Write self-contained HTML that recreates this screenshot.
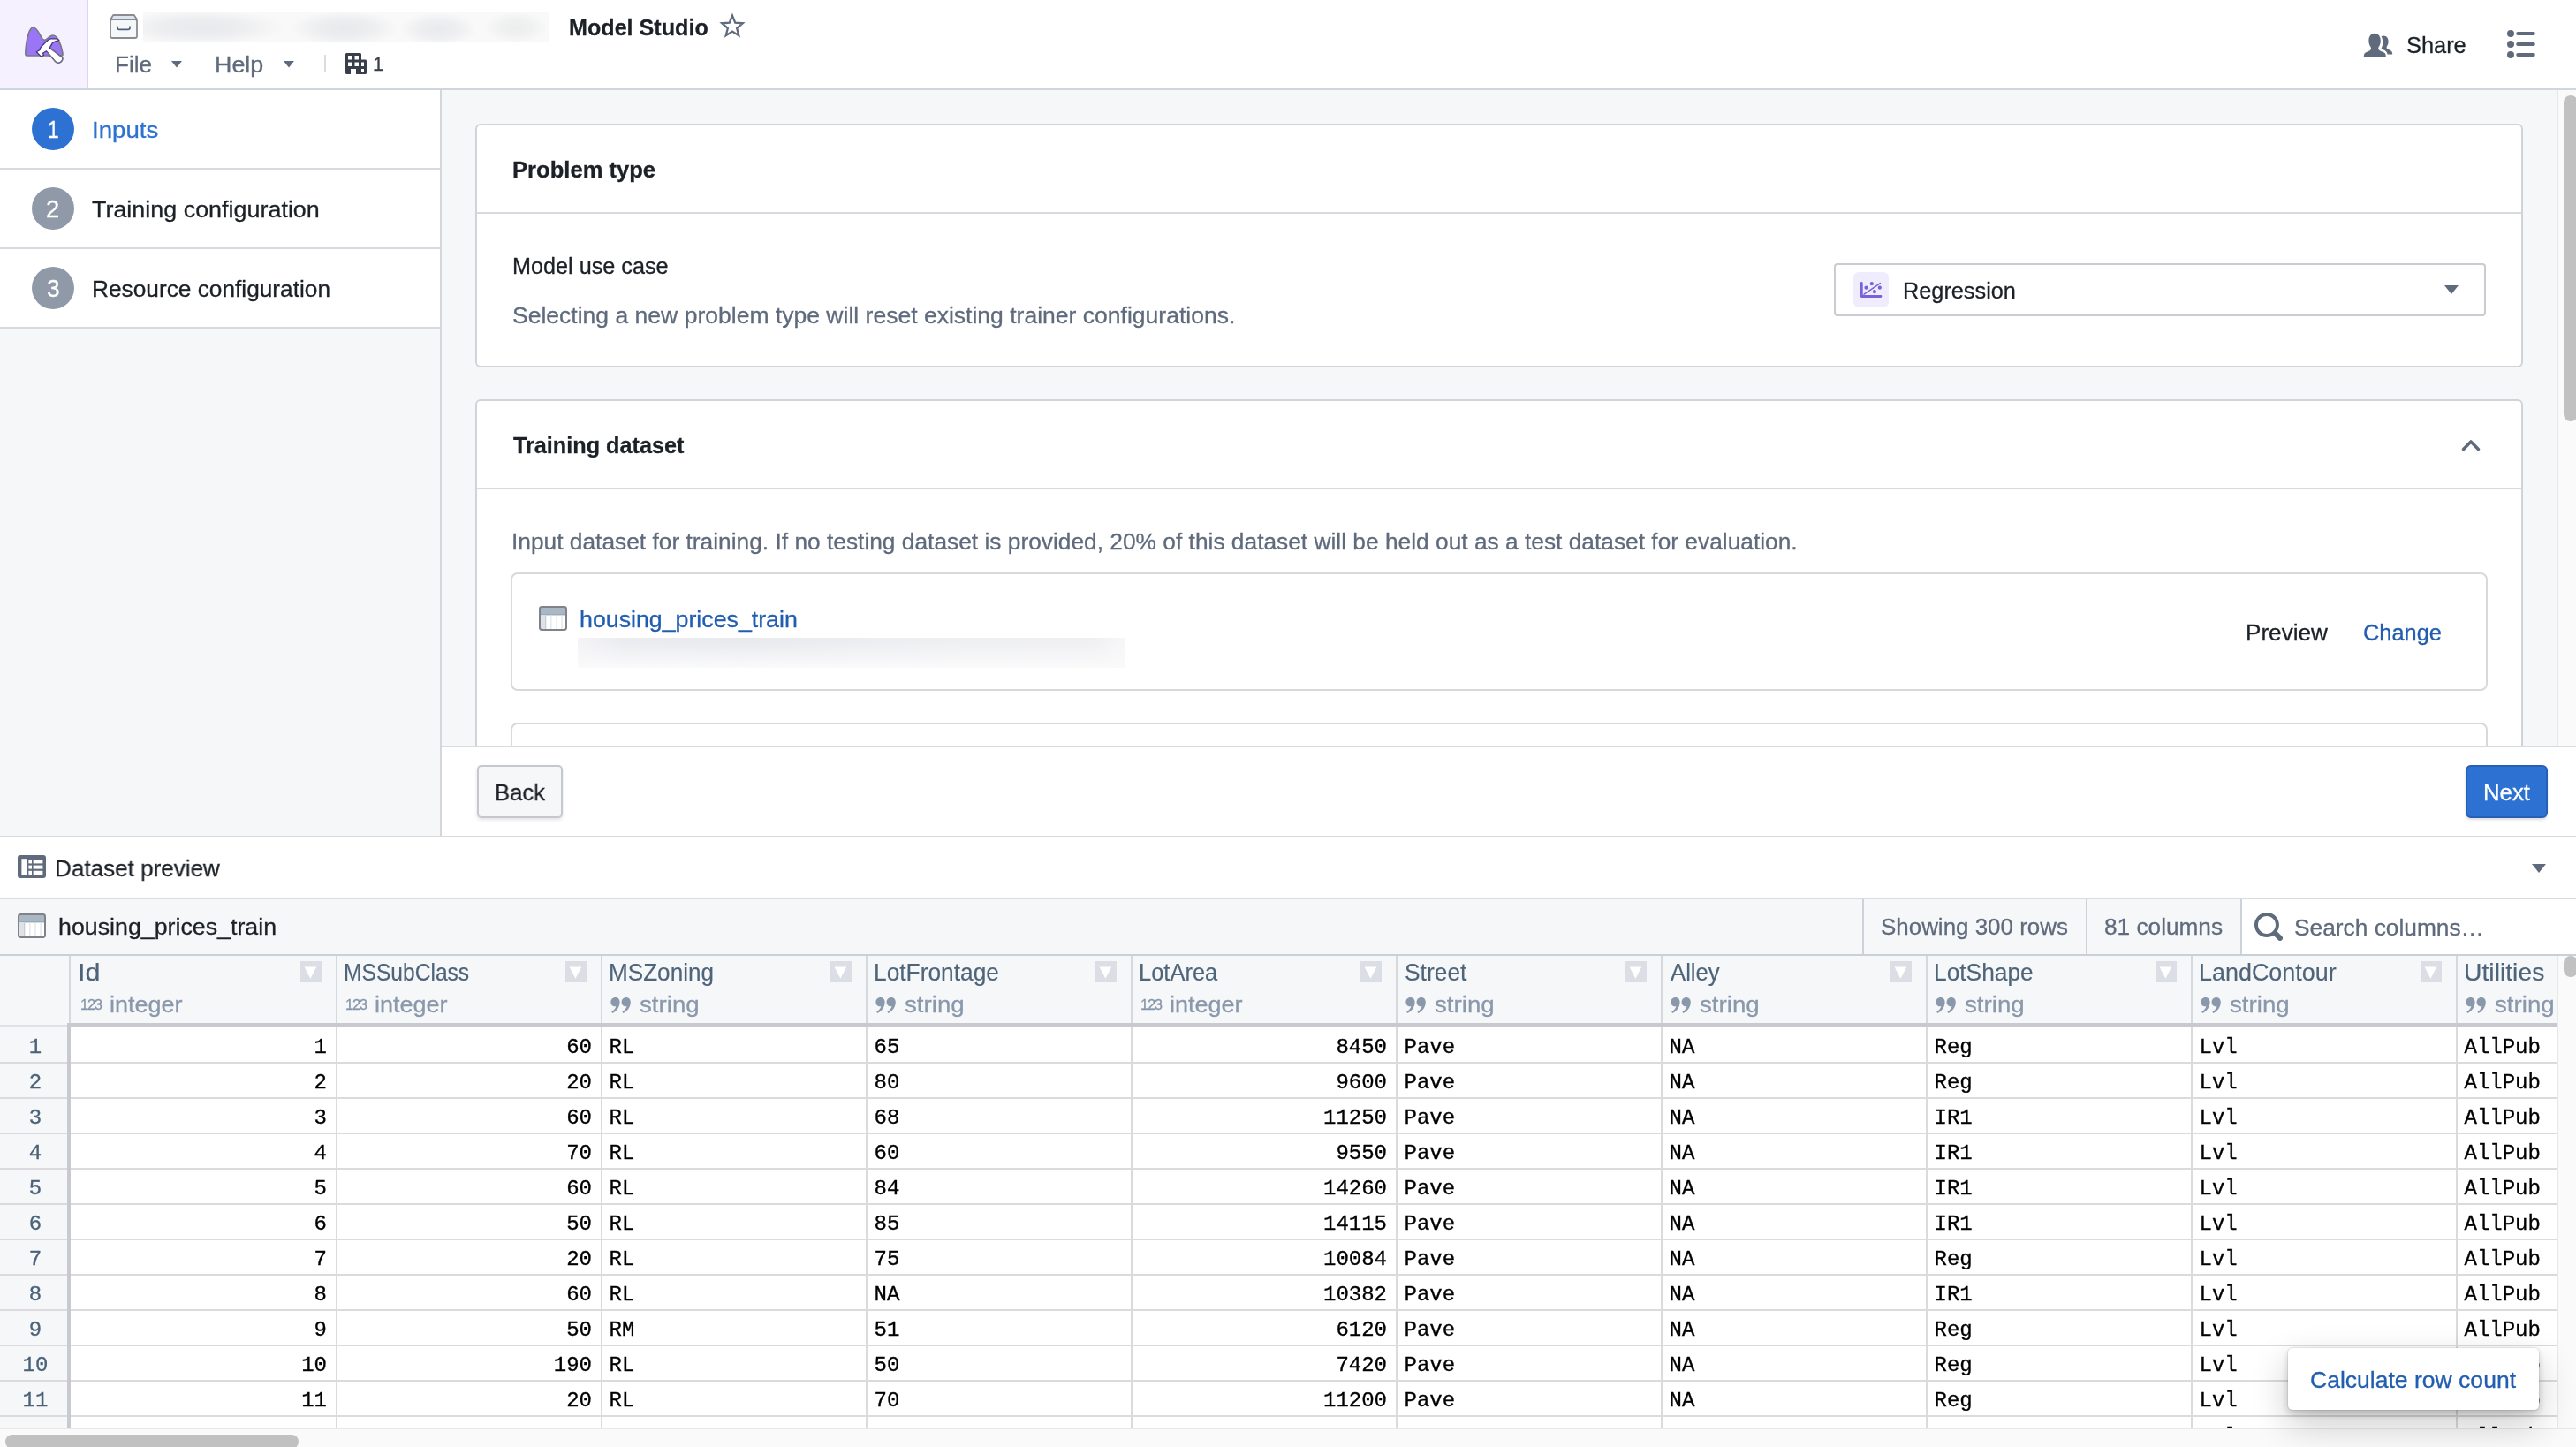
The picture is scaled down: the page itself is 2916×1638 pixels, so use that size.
<!DOCTYPE html>
<html lang="en"><head><meta charset="utf-8"><title>Model Studio</title>
<style>
html,body{margin:0;padding:0}
body{width:2916px;height:1638px;overflow:hidden;position:relative;background:#fff;
 font-family:"Liberation Sans",sans-serif;font-size:26px;color:#1c2127;-webkit-font-smoothing:antialiased}
div,svg{box-sizing:border-box}
.a{position:absolute}
.t{position:absolute;white-space:nowrap;line-height:1;-webkit-text-stroke:0.3px currentColor}
.m{position:absolute;white-space:pre;line-height:1;font-family:"Liberation Mono",monospace;-webkit-text-stroke:0.32px currentColor}
.card{position:absolute;background:#fff;border:2px solid #d0d4da;border-radius:6px}
.hl{position:absolute;height:2px;background:#d7dade}
.vl{position:absolute;width:2px;background:#d7dade}
</style></head><body>
<div id="root" style="position:absolute;left:0;top:0;width:2916px;height:1638px;overflow:hidden;will-change:transform">

<div class="a" style="left:0;top:0;width:2916px;height:102px;background:#fff;border-bottom:2px solid #cfd6de"></div>
<div class="a" style="left:0;top:0;width:100px;height:100px;background:#f5f1fe;border-right:2px solid #ddd3fb"></div>
<svg class="a" style="left:0;top:0" width="100" height="100" viewBox="0 0 100 100">
<path d="M30.2 63 C28.6 63 28.7 61 29 57 C30 44 33 31 37.5 31 C41.8 31 44 37.5 47 42.6 C49.2 46.2 51.3 46 54 43.4 C56 41.4 58 40 60 40 C65 40 69 50 70.8 59.6 C71.3 62.2 70.8 63 69.4 63 Z" fill="#9a76f6" stroke="#777a82" stroke-width="1.7" stroke-linejoin="round"/>
<path d="M41.2 58.8 L46.6 64.1 L49.5 62.2 L48.5 60.2 L52.5 57.8 L62.6 69.6 C64.2 71.4 67 71.6 69 70 C71 68.4 71.6 66 70 64.4 L56.2 54.2 L57.5 51.9 L59.2 48.9 C60.5 47.5 62.5 46.8 64.8 46.2 L66.8 45.6 C66 44.6 64.8 43.9 63.5 43.9 L57.2 43.9 C55.5 44.3 53.8 45.6 52.2 47.2 L47.2 52.2 L45.2 55.2 L45.2 56.5 Z" fill="#fff" stroke="#45357f" stroke-width="1.3" stroke-linejoin="round"/>
<path d="M53.4 58.8 L62.6 69.6 C64.2 71.4 67 71.6 69 70 C71 68.4 71.6 66 70 64.4 L58 55.6" fill="none" stroke="#74757d" stroke-width="1.3" stroke-linejoin="round"/>
</svg>
<svg class="a" style="left:122px;top:14px" width="36" height="32" viewBox="0 0 36 32">
<path d="M6.2 3 L29.8 3 L33 8 L3 8 Z" fill="#dbe6f0" stroke="#898c92" stroke-width="1.8" stroke-linejoin="round"/>
<rect x="3" y="8" width="30" height="21" rx="2" fill="#f6f7f9" stroke="#898c92" stroke-width="1.8"/>
<path d="M11 16.2 L11 17.5 Q11 19.4 13 19.4 L23 19.4 Q25 19.4 25 17.5 L25 16.2" fill="none" stroke="#4b6279" stroke-width="1.7" stroke-linecap="round"/>
</svg>
<div class="a" style="left:162px;top:14px;width:460px;height:34px;background:radial-gradient(ellipse 95px 20px at 66px 17px,#e8e9ec 0%,rgba(232,233,236,0.7) 50%,rgba(232,233,236,0) 100%),radial-gradient(ellipse 62px 20px at 228px 18px,#e8e9ec 0%,rgba(232,233,236,0.7) 50%,rgba(232,233,236,0) 100%),radial-gradient(ellipse 44px 19px at 334px 19px,#e9eaed 0%,rgba(233,234,237,0.7) 50%,rgba(233,234,237,0) 100%),radial-gradient(ellipse 36px 18px at 422px 17px,#eceded 0%,rgba(236,237,237,0.7) 50%,rgba(236,237,237,0) 100%),#f9f9f9"></div>
<div class="t " style="left:643.55px;top:19.00px;font-size:25.5px;color:#1c2127;font-weight:bold;transform-origin:0 0;transform:scaleX(0.9855);">Model Studio</div>
<svg class="a" style="left:813px;top:13px" width="32" height="32" viewBox="0 0 32 32">
<path transform="translate(16 16.6) scale(0.92) translate(-16 -16.6)" d="M16 3.6 L19.5 12.4 L28.8 13 L21.6 19 L23.9 28.1 L16 23.1 L8.1 28.1 L10.4 19 L3.2 13 L12.5 12.4 Z" fill="none" stroke="#5f6b7c" stroke-width="2.5" stroke-linejoin="miter"/>
</svg>
<div class="t " style="left:129.83px;top:60.00px;font-size:26.6px;color:#5f6b7c;transform-origin:0 0;transform:scaleX(0.9815);">File</div>
<svg class="a" style="left:194px;top:69px" width="12" height="8" viewBox="0 0 12 8"><path d="M0 0 L12 0 L6 7.6 Z" fill="#5f6b7c"/></svg>
<div class="t " style="left:243.27px;top:60.00px;font-size:26.6px;color:#5f6b7c;transform-origin:0 0;transform:scaleX(1.0096);">Help</div>
<svg class="a" style="left:321px;top:69px" width="12" height="8" viewBox="0 0 12 8"><path d="M0 0 L12 0 L6 7.6 Z" fill="#5f6b7c"/></svg>
<div class="a" style="left:367px;top:62px;width:2px;height:20px;background:#dcdcdc"></div>
<svg class="a" style="left:391px;top:60px" width="24" height="24" viewBox="0 0 16 16"><path fill="#383e4a" fill-rule="evenodd" d="M15 5h-3V1c0-.55-.45-1-1-1H1C.45 0 0 .45 0 1v14c0 .55.45 1 1 1h3v-4h4v4h7c.55 0 1-.45 1-1V6c0-.55-.45-1-1-1zM5 10H2V7h3v3zm0-5H2V2h3v3zm5 5H7V7h3v3zm0-5H7V2h3v3zm4 9h-2v-2h2v2zm0-4h-2V7h2v3z"/></svg>
<div class="t " style="left:422px;top:62.00px;font-size:22px;color:#383e4a;">1</div>
<svg class="a" style="left:2675px;top:36px" width="34" height="30" viewBox="0 0 34 30">
<g fill="#5f6b7c">
<path d="M23 4.6 C26.6 4.6 28.6 7.4 28.6 11 C28.6 13 28 15 26.9 16.4 C26.5 16.9 26.5 18.2 27 18.8 C27.8 19.8 30 20.4 31.6 21.4 C32.8 22.2 33.2 23.6 33.2 25.4 L27.6 25.4 C27.2 23 25.6 21.6 23.4 20.6 C22 20 21 19.4 20.6 18.6 C21.8 16.6 22.4 14 22.2 11 C22.1 8.8 21.6 6.8 20.6 5.2 C21.3 4.8 22.1 4.6 23 4.6 Z"/>
<path d="M13 1.8 C17.4 1.8 19.8 5.4 19.8 10.2 C19.8 12.8 19 15.4 17.6 17.2 C17.1 17.9 17.1 19.4 17.7 20.2 C18.7 21.5 21.8 22.2 23.8 23.4 C25.4 24.4 25.8 26 25.8 28 L0.8 28 C0.8 26 1.2 24.4 2.8 23.4 C4.8 22.2 7.6 21.5 8.6 20.2 C9.2 19.4 9.2 17.9 8.6 17.2 C7.2 15.4 6.4 12.8 6.4 10.2 C6.4 5.4 8.6 1.8 13 1.8 Z" stroke="#fff" stroke-width="1.6" paint-order="stroke"/>
</g></svg>
<div class="t " style="left:2724.14px;top:38.00px;font-size:26.5px;color:#1c2127;transform-origin:0 0;transform:scaleX(0.9576);">Share</div>
<svg class="a" style="left:2836px;top:32px" width="36" height="36" viewBox="0 0 36 36"><g fill="#5f6b7c">
<circle cx="6" cy="6" r="4"/><circle cx="6" cy="18" r="4"/><circle cx="6" cy="30" r="4"/>
<rect x="12.2" y="4" width="21.6" height="4" rx="2"/><rect x="12.2" y="16" width="21.6" height="4" rx="2"/><rect x="12.2" y="28" width="21.6" height="4" rx="2"/></g></svg>
<div class="a" style="left:0;top:102px;width:500px;height:844px;background:#f6f7f9;border-right:2px solid #d3d6db"></div>
<div class="a" style="left:0;top:102px;width:498px;height:90px;background:#fff;border-bottom:2px solid #d7dade"></div>
<div class="a" style="left:36px;top:122px;width:48px;height:48px;border-radius:24px;background:#2d72d2"></div>
<div class="t " style="left:53.7px;top:134.00px;font-size:27px;color:#fff;transform-origin:0 0;transform:scaleX(0.8396);">1</div>
<div class="t " style="left:103.51px;top:134.00px;font-size:26.5px;color:#2d72d2;transform-origin:0 0;transform:scaleX(1.0442);">Inputs</div>
<div class="a" style="left:0;top:192px;width:498px;height:90px;background:#fff;border-bottom:2px solid #d7dade"></div>
<div class="a" style="left:36px;top:212px;width:48px;height:48px;border-radius:24px;background:#8f99a8"></div>
<div class="t " style="left:52.37px;top:224.00px;font-size:27px;color:#fff;transform-origin:0 0;transform:scaleX(1.0105);">2</div>
<div class="t " style="left:104.01px;top:224.00px;font-size:26.5px;color:#1c2127;transform-origin:0 0;transform:scaleX(1.0155);">Training configuration</div>
<div class="a" style="left:0;top:282px;width:498px;height:90px;background:#fff;border-bottom:2px solid #d7dade"></div>
<div class="a" style="left:36px;top:302px;width:48px;height:48px;border-radius:24px;background:#8f99a8"></div>
<div class="t " style="left:52.55px;top:314.00px;font-size:27px;color:#fff;transform-origin:0 0;transform:scaleX(0.9733);">3</div>
<div class="t " style="left:103.81px;top:314.00px;font-size:26.5px;color:#1c2127;transform-origin:0 0;transform:scaleX(0.9909);">Resource configuration</div>
<div class="a" style="left:500px;top:102px;width:2394px;height:742px;background:#f6f7f9;overflow:hidden">
<div class="card" style="left:38px;top:38px;width:2318px;height:276px"></div>
<div class="hl" style="left:40px;top:138px;width:2314px"></div>
<div class="card" style="left:38px;top:350px;width:2318px;height:700px"></div>
<div class="hl" style="left:40px;top:450px;width:2314px"></div>
<div class="a" style="left:78px;top:546px;width:2238px;height:134px;background:#fff;border:2px solid #d8d9db;border-radius:8px"></div>
<div class="a" style="left:78px;top:716px;width:2238px;height:134px;background:#fff;border:2px solid #d8d9db;border-radius:8px"></div>
</div>
<div class="t " style="left:580.13px;top:179.00px;font-size:26.5px;color:#1c2127;font-weight:bold;transform-origin:0 0;transform:scaleX(0.9656);">Problem type</div>
<div class="t " style="left:579.6px;top:288.00px;font-size:26.5px;color:#1c2127;transform-origin:0 0;transform:scaleX(0.9516);">Model use case</div>
<div class="t " style="left:579.68px;top:344.00px;font-size:26.5px;color:#5f6b7c;transform-origin:0 0;transform:scaleX(1.0010);">Selecting a new problem type will reset existing trainer configurations.</div>
<div class="a" style="left:2076px;top:298px;width:738px;height:60px;background:#fff;border:2px solid #c9ccd1;border-radius:4px"></div>
<div class="a" style="left:2098px;top:308px;width:40px;height:40px;background:#efecfd;border-radius:6px"></div>
<svg class="a" style="left:2104px;top:316px" width="28" height="24" viewBox="0 0 28 24">
<path d="M3.3 4.5 L3.3 19.5 L25 19.5" fill="none" stroke="#7961db" stroke-width="2.8" stroke-linecap="round" stroke-linejoin="round"/>
<path d="M6 17.2 L24.4 4.6" stroke="#7961db" stroke-width="1.5" stroke-linecap="round"/>
<circle cx="14.8" cy="5.2" r="2.1" fill="#7961db"/><circle cx="8.5" cy="9.7" r="2.1" fill="#7961db"/>
<circle cx="23.8" cy="9.7" r="2.1" fill="#7961db"/><circle cx="17.9" cy="14.2" r="2.1" fill="#7961db"/></svg>
<div class="t " style="left:2153.69px;top:316.00px;font-size:26.5px;color:#1c2127;transform-origin:0 0;transform:scaleX(0.9540);">Regression</div>
<svg class="a" style="left:2767px;top:323px" width="16" height="10" viewBox="0 0 16 10"><path d="M0 0 L16 0 L8 10 Z" fill="#5f6b7c"/></svg>
<div class="t " style="left:580.53px;top:491.00px;font-size:26.5px;color:#1c2127;font-weight:bold;transform-origin:0 0;transform:scaleX(0.9514);">Training dataset</div>
<svg class="a" style="left:2785px;top:496px" width="24" height="16" viewBox="0 0 24 16"><path d="M3.6 12.4 L12 4 L20.4 12.4" fill="none" stroke="#5f6b7c" stroke-width="3.6" stroke-linecap="round" stroke-linejoin="round"/></svg>
<div class="t " style="left:579.33px;top:600.00px;font-size:26.5px;color:#5f6b7c;transform-origin:0 0;transform:scaleX(0.9931);">Input dataset for training. If no testing dataset is provided, 20% of this dataset will be held out as a test dataset for evaluation.</div>
<svg class="a" style="left:609px;top:685px" width="34" height="30" viewBox="0 0 34 30">
<rect x="2" y="2" width="30" height="26" rx="2.4" fill="#fff"/>
<rect x="2" y="2" width="30" height="8.6" fill="#a9b8c4"/>
<rect x="2" y="10.2" width="30" height="1.2" fill="#8f9fad"/>
<rect x="2.6" y="11.4" width="6" height="16" fill="#dde3e9"/>
<rect x="8" y="11.4" width="1.3" height="16" fill="#c3ced8"/>
<rect x="14.2" y="11.4" width="1.3" height="16" fill="#e1e6ea"/>
<rect x="20.4" y="11.4" width="1.3" height="16" fill="#e1e6ea"/>
<rect x="26.4" y="11.4" width="1.3" height="16" fill="#e1e6ea"/>
<rect x="2" y="2" width="30" height="26" rx="2.4" fill="none" stroke="#7f8287" stroke-width="2"/>
</svg>
<div class="t " style="left:656.29px;top:688.00px;font-size:26.5px;color:#215db0;transform-origin:0 0;transform:scaleX(1.0093);">housing_prices_train</div>
<div class="a" style="left:654px;top:722px;width:620px;height:34px;background:linear-gradient(180deg,rgba(250,250,251,0) 15%,rgba(250,250,251,0.55) 60%,rgba(250,250,251,1) 100%),linear-gradient(90deg,#f4f4f6 0%,#ebecf0 8%,#e9eaee 30%,#ecedf0 50%,#eff0f2 72%,#f0f0f3 94%,#f7f7f8 100%)"></div>
<div class="t " style="left:2541.82px;top:703.00px;font-size:26.5px;color:#1c2127;transform-origin:0 0;transform:scaleX(0.9857);">Preview</div>
<div class="t " style="left:2675.36px;top:703.00px;font-size:26.5px;color:#215db0;transform-origin:0 0;transform:scaleX(0.9577);">Change</div>
<div class="a" style="left:2894px;top:102px;width:22px;height:742px;background:#fafafa;border-left:2px solid #e8e8e8"></div>
<div class="a" style="left:2902px;top:108px;width:16px;height:369px;background:#c1c1c1;border-radius:8px"></div>
<div class="a" style="left:500px;top:844px;width:2416px;height:102px;background:#fff;border-top:2px solid #d7dade"></div>
<div class="a" style="left:540px;top:866px;width:97px;height:60px;background:#f6f7f9;border:2px solid #c5c8cd;border-radius:5px;box-shadow:0 2px 4px rgba(17,20,24,.12)"></div>
<div class="t " style="left:559.87px;top:884.00px;font-size:26.5px;color:#1c2127;transform-origin:0 0;transform:scaleX(0.9658);">Back</div>
<div class="a" style="left:2791px;top:866px;width:93px;height:60px;background:#2d72d2;border:2px solid #2560b6;border-radius:6px;box-shadow:0 2px 3px rgba(17,20,24,.15)"></div>
<div class="t " style="left:2810.75px;top:884.00px;font-size:26.5px;color:#fff;transform-origin:0 0;transform:scaleX(0.9732);">Next</div>
<div class="a" style="left:0;top:946px;width:2916px;height:2px;background:#d9dadc"></div>
<div class="a" style="left:0;top:948px;width:2916px;height:70px;background:#fff;border-bottom:2px solid #d9dadc"></div>
<svg class="a" style="left:19px;top:967px" width="34" height="28" viewBox="0 0 34 28">
<rect x="1" y="1" width="32" height="26" rx="3" fill="#5f6b7c"/>
<g fill="#fff"><rect x="5.4" y="5.2" width="5.8" height="18"/>
<rect x="13.4" y="7" width="3.6" height="3.4"/><rect x="18.6" y="7" width="10.8" height="3.4"/>
<rect x="13.4" y="12.6" width="3.6" height="4"/><rect x="18.6" y="12.6" width="10.8" height="4"/>
<rect x="13.4" y="18.8" width="3.6" height="4.4"/><rect x="18.6" y="18.8" width="10.8" height="4.4"/></g></svg>
<div class="t " style="left:61.93px;top:970.00px;font-size:26.5px;color:#1c2127;transform-origin:0 0;transform:scaleX(0.9834);">Dataset preview</div>
<svg class="a" style="left:2866px;top:978px" width="16" height="10" viewBox="0 0 16 10"><path d="M0 0 L16 0 L8 10 Z" fill="#5f6b7c"/></svg>
<div class="a" style="left:0;top:1018px;width:2916px;height:64px;background:#f6f7f9;border-bottom:2px solid #c8d0d9"></div>
<svg class="a" style="left:19px;top:1033px" width="34" height="30" viewBox="0 0 34 30">
<rect x="2" y="2" width="30" height="26" rx="2.4" fill="#fff"/>
<rect x="2" y="2" width="30" height="8.6" fill="#a9b8c4"/>
<rect x="2" y="10.2" width="30" height="1.2" fill="#8f9fad"/>
<rect x="2.6" y="11.4" width="6" height="16" fill="#dde3e9"/>
<rect x="8" y="11.4" width="1.3" height="16" fill="#c3ced8"/>
<rect x="14.2" y="11.4" width="1.3" height="16" fill="#e1e6ea"/>
<rect x="20.4" y="11.4" width="1.3" height="16" fill="#e1e6ea"/>
<rect x="26.4" y="11.4" width="1.3" height="16" fill="#e1e6ea"/>
<rect x="2" y="2" width="30" height="26" rx="2.4" fill="none" stroke="#7f8287" stroke-width="2"/>
</svg>
<div class="t " style="left:66.29px;top:1036.00px;font-size:26.5px;color:#1c2127;transform-origin:0 0;transform:scaleX(1.0101);">housing_prices_train</div>
<div class="a" style="left:2108px;top:1018px;width:2px;height:62px;background:#ccd3db"></div>
<div class="a" style="left:2361px;top:1018px;width:2px;height:62px;background:#ccd3db"></div>
<div class="a" style="left:2536px;top:1018px;width:2px;height:62px;background:#ccd3db"></div>
<div class="a" style="left:2538px;top:1018px;width:378px;height:62px;background:#fff"></div>
<div class="t " style="left:2129.21px;top:1036.00px;font-size:26.5px;color:#5f6b7c;transform-origin:0 0;transform:scaleX(0.9786);">Showing 300 rows</div>
<div class="t " style="left:2382.25px;top:1036.00px;font-size:26.5px;color:#5f6b7c;transform-origin:0 0;transform:scaleX(0.9892);">81 columns</div>
<svg class="a" style="left:2552px;top:1033px" width="32" height="32" viewBox="0 0 16 16"><path fill="#5f6b7c" fill-rule="evenodd" d="M15.55 13.43l-2.67-2.68a6.94 6.94 0 001.11-3.76c0-3.87-3.13-7-7-7s-7 3.13-7 7 3.13 7 7 7c1.39 0 2.68-.42 3.76-1.11l2.68 2.67a1.498 1.498 0 102.12-2.12zm-8.56-1.44c-2.76 0-5-2.24-5-5s2.24-5 5-5 5 2.24 5 5-2.24 5-5 5z"/></svg>
<div class="t " style="left:2597.49px;top:1037.00px;font-size:26.5px;color:#5f6b7c;transform-origin:0 0;transform:scaleX(0.9927);">Search columns…</div>
<div class="a" style="left:0;top:1082px;width:2894px;height:534px;overflow:hidden;background:#fff">
<div class="a" style="left:0;top:0;width:2894px;height:78px;background:#f6f7f9"></div>
<div class="a" style="left:0;top:78px;width:76px;height:460px;background:#f6f7f9"></div>
<div class="vl" style="left:78px;top:0;height:78px;background:#d5d8dd"></div>
<div class="vl" style="left:380px;top:0;height:78px;background:#d5d8dd"></div>
<div class="vl" style="left:380px;top:80px;height:460px;background:#dbdbdd"></div>
<div class="vl" style="left:680px;top:0;height:78px;background:#d5d8dd"></div>
<div class="vl" style="left:680px;top:80px;height:460px;background:#dbdbdd"></div>
<div class="vl" style="left:980px;top:0;height:78px;background:#d5d8dd"></div>
<div class="vl" style="left:980px;top:80px;height:460px;background:#dbdbdd"></div>
<div class="vl" style="left:1280px;top:0;height:78px;background:#d5d8dd"></div>
<div class="vl" style="left:1280px;top:80px;height:460px;background:#dbdbdd"></div>
<div class="vl" style="left:1580px;top:0;height:78px;background:#d5d8dd"></div>
<div class="vl" style="left:1580px;top:80px;height:460px;background:#dbdbdd"></div>
<div class="vl" style="left:1880px;top:0;height:78px;background:#d5d8dd"></div>
<div class="vl" style="left:1880px;top:80px;height:460px;background:#dbdbdd"></div>
<div class="vl" style="left:2180px;top:0;height:78px;background:#d5d8dd"></div>
<div class="vl" style="left:2180px;top:80px;height:460px;background:#dbdbdd"></div>
<div class="vl" style="left:2480px;top:0;height:78px;background:#d5d8dd"></div>
<div class="vl" style="left:2480px;top:80px;height:460px;background:#dbdbdd"></div>
<div class="vl" style="left:2780px;top:0;height:78px;background:#d5d8dd"></div>
<div class="vl" style="left:2780px;top:80px;height:460px;background:#dbdbdd"></div>
<div class="hl" style="left:0;top:120px;width:2894px;background:#dbdbdd"></div>
<div class="hl" style="left:0;top:160px;width:2894px;background:#dbdbdd"></div>
<div class="hl" style="left:0;top:200px;width:2894px;background:#dbdbdd"></div>
<div class="hl" style="left:0;top:240px;width:2894px;background:#dbdbdd"></div>
<div class="hl" style="left:0;top:280px;width:2894px;background:#dbdbdd"></div>
<div class="hl" style="left:0;top:320px;width:2894px;background:#dbdbdd"></div>
<div class="hl" style="left:0;top:360px;width:2894px;background:#dbdbdd"></div>
<div class="hl" style="left:0;top:400px;width:2894px;background:#dbdbdd"></div>
<div class="hl" style="left:0;top:440px;width:2894px;background:#dbdbdd"></div>
<div class="hl" style="left:0;top:480px;width:2894px;background:#dbdbdd"></div>
<div class="hl" style="left:0;top:520px;width:2894px;background:#dbdbdd"></div>
<div class="hl" style="left:0;top:560px;width:2894px;background:#dbdbdd"></div>
<div class="hl" style="left:0;top:78px;width:76px;background:#dfe1e5"></div>
<div class="a" style="left:76px;top:76px;width:2818px;height:4px;background:#c9cad1"></div>
<div class="a" style="left:76px;top:76px;width:4px;height:470px;background:#c9cad1"></div>
<div class="t " style="left:87.99px;top:5.00px;font-size:27.4px;color:#4e6479;-webkit-text-stroke:0.18px currentColor;transform-origin:0 0;transform:scaleX(1.1150);">Id</div>
<div class="t" style="left:91px;top:48.41px;font-size:16.6px;color:#8796aa;letter-spacing:-1.3px">123</div>
<div class="t " style="left:123.54px;top:42.00px;font-size:26.5px;color:#8a98ab;transform-origin:0 0;transform:scaleX(1.0195);">integer</div>
<div class="a" style="left:340px;top:6px;width:24px;height:24px;background:#dbdfe5"></div>
<svg class="a" style="left:344px;top:12px" width="16" height="14" viewBox="0 0 16 14"><path d="M0.6 0.6 L14.2 0.6 L7.4 13.8 Z" fill="#fff"/></svg>
<div class="t " style="left:389.47px;top:5.00px;font-size:27.4px;color:#4e6479;-webkit-text-stroke:0.18px currentColor;transform-origin:0 0;transform:scaleX(0.8979);">MSSubClass</div>
<div class="t" style="left:391px;top:48.41px;font-size:16.6px;color:#8796aa;letter-spacing:-1.3px">123</div>
<div class="t " style="left:423.54px;top:42.00px;font-size:26.5px;color:#8a98ab;transform-origin:0 0;transform:scaleX(1.0195);">integer</div>
<div class="a" style="left:640px;top:6px;width:24px;height:24px;background:#dbdfe5"></div>
<svg class="a" style="left:644px;top:12px" width="16" height="14" viewBox="0 0 16 14"><path d="M0.6 0.6 L14.2 0.6 L7.4 13.8 Z" fill="#fff"/></svg>
<div class="t " style="left:689.05px;top:5.00px;font-size:27.4px;color:#4e6479;-webkit-text-stroke:0.18px currentColor;transform-origin:0 0;transform:scaleX(0.9534);">MSZoning</div>
<svg class="a" style="left:691px;top:46px" width="24" height="20" viewBox="0 0 24 20"><g fill="#8a98ab">
<path d="M5.6 1 C8.6 1 10.6 3.2 10.6 6.4 C10.6 11.4 7.4 16.2 2.2 19 L1.2 17.4 C4.2 15.4 5.9 13.4 6.3 11 C5.9 11.2 5.4 11.3 4.9 11.3 C2.1 11.3 0.4 9.1 0.4 6.3 C0.4 3.3 2.6 1 5.6 1 Z"/>
<path d="M17.8 1 C20.8 1 22.8 3.2 22.8 6.4 C22.8 11.4 19.6 16.2 14.4 19 L13.4 17.4 C16.4 15.4 18.1 13.4 18.5 11 C18.1 11.2 17.6 11.3 17.1 11.3 C14.3 11.3 12.6 9.1 12.6 6.3 C12.6 3.3 14.8 1 17.8 1 Z"/></g></svg>
<div class="t " style="left:724.49px;top:42.00px;font-size:26.5px;color:#8a98ab;transform-origin:0 0;transform:scaleX(1.0453);">string</div>
<div class="a" style="left:940px;top:6px;width:24px;height:24px;background:#dbdfe5"></div>
<svg class="a" style="left:944px;top:12px" width="16" height="14" viewBox="0 0 16 14"><path d="M0.6 0.6 L14.2 0.6 L7.4 13.8 Z" fill="#fff"/></svg>
<div class="t " style="left:989.33px;top:5.00px;font-size:27.4px;color:#4e6479;-webkit-text-stroke:0.18px currentColor;transform-origin:0 0;transform:scaleX(0.9611);">LotFrontage</div>
<svg class="a" style="left:991px;top:46px" width="24" height="20" viewBox="0 0 24 20"><g fill="#8a98ab">
<path d="M5.6 1 C8.6 1 10.6 3.2 10.6 6.4 C10.6 11.4 7.4 16.2 2.2 19 L1.2 17.4 C4.2 15.4 5.9 13.4 6.3 11 C5.9 11.2 5.4 11.3 4.9 11.3 C2.1 11.3 0.4 9.1 0.4 6.3 C0.4 3.3 2.6 1 5.6 1 Z"/>
<path d="M17.8 1 C20.8 1 22.8 3.2 22.8 6.4 C22.8 11.4 19.6 16.2 14.4 19 L13.4 17.4 C16.4 15.4 18.1 13.4 18.5 11 C18.1 11.2 17.6 11.3 17.1 11.3 C14.3 11.3 12.6 9.1 12.6 6.3 C12.6 3.3 14.8 1 17.8 1 Z"/></g></svg>
<div class="t " style="left:1024.49px;top:42.00px;font-size:26.5px;color:#8a98ab;transform-origin:0 0;transform:scaleX(1.0453);">string</div>
<div class="a" style="left:1240px;top:6px;width:24px;height:24px;background:#dbdfe5"></div>
<svg class="a" style="left:1244px;top:12px" width="16" height="14" viewBox="0 0 16 14"><path d="M0.6 0.6 L14.2 0.6 L7.4 13.8 Z" fill="#fff"/></svg>
<div class="t " style="left:1289.4px;top:5.00px;font-size:27.4px;color:#4e6479;-webkit-text-stroke:0.18px currentColor;transform-origin:0 0;transform:scaleX(0.9300);">LotArea</div>
<div class="t" style="left:1291px;top:48.41px;font-size:16.6px;color:#8796aa;letter-spacing:-1.3px">123</div>
<div class="t " style="left:1323.54px;top:42.00px;font-size:26.5px;color:#8a98ab;transform-origin:0 0;transform:scaleX(1.0195);">integer</div>
<div class="a" style="left:1540px;top:6px;width:24px;height:24px;background:#dbdfe5"></div>
<svg class="a" style="left:1544px;top:12px" width="16" height="14" viewBox="0 0 16 14"><path d="M0.6 0.6 L14.2 0.6 L7.4 13.8 Z" fill="#fff"/></svg>
<div class="t " style="left:1589.84px;top:5.00px;font-size:27.4px;color:#4e6479;-webkit-text-stroke:0.18px currentColor;transform-origin:0 0;transform:scaleX(0.9631);">Street</div>
<svg class="a" style="left:1591px;top:46px" width="24" height="20" viewBox="0 0 24 20"><g fill="#8a98ab">
<path d="M5.6 1 C8.6 1 10.6 3.2 10.6 6.4 C10.6 11.4 7.4 16.2 2.2 19 L1.2 17.4 C4.2 15.4 5.9 13.4 6.3 11 C5.9 11.2 5.4 11.3 4.9 11.3 C2.1 11.3 0.4 9.1 0.4 6.3 C0.4 3.3 2.6 1 5.6 1 Z"/>
<path d="M17.8 1 C20.8 1 22.8 3.2 22.8 6.4 C22.8 11.4 19.6 16.2 14.4 19 L13.4 17.4 C16.4 15.4 18.1 13.4 18.5 11 C18.1 11.2 17.6 11.3 17.1 11.3 C14.3 11.3 12.6 9.1 12.6 6.3 C12.6 3.3 14.8 1 17.8 1 Z"/></g></svg>
<div class="t " style="left:1624.49px;top:42.00px;font-size:26.5px;color:#8a98ab;transform-origin:0 0;transform:scaleX(1.0453);">string</div>
<div class="a" style="left:1840px;top:6px;width:24px;height:24px;background:#dbdfe5"></div>
<svg class="a" style="left:1844px;top:12px" width="16" height="14" viewBox="0 0 16 14"><path d="M0.6 0.6 L14.2 0.6 L7.4 13.8 Z" fill="#fff"/></svg>
<div class="t " style="left:1890.53px;top:5.00px;font-size:27.4px;color:#4e6479;-webkit-text-stroke:0.18px currentColor;transform-origin:0 0;transform:scaleX(0.9382);">Alley</div>
<svg class="a" style="left:1891px;top:46px" width="24" height="20" viewBox="0 0 24 20"><g fill="#8a98ab">
<path d="M5.6 1 C8.6 1 10.6 3.2 10.6 6.4 C10.6 11.4 7.4 16.2 2.2 19 L1.2 17.4 C4.2 15.4 5.9 13.4 6.3 11 C5.9 11.2 5.4 11.3 4.9 11.3 C2.1 11.3 0.4 9.1 0.4 6.3 C0.4 3.3 2.6 1 5.6 1 Z"/>
<path d="M17.8 1 C20.8 1 22.8 3.2 22.8 6.4 C22.8 11.4 19.6 16.2 14.4 19 L13.4 17.4 C16.4 15.4 18.1 13.4 18.5 11 C18.1 11.2 17.6 11.3 17.1 11.3 C14.3 11.3 12.6 9.1 12.6 6.3 C12.6 3.3 14.8 1 17.8 1 Z"/></g></svg>
<div class="t " style="left:1924.49px;top:42.00px;font-size:26.5px;color:#8a98ab;transform-origin:0 0;transform:scaleX(1.0453);">string</div>
<div class="a" style="left:2140px;top:6px;width:24px;height:24px;background:#dbdfe5"></div>
<svg class="a" style="left:2144px;top:12px" width="16" height="14" viewBox="0 0 16 14"><path d="M0.6 0.6 L14.2 0.6 L7.4 13.8 Z" fill="#fff"/></svg>
<div class="t " style="left:2189.34px;top:5.00px;font-size:27.4px;color:#4e6479;-webkit-text-stroke:0.18px currentColor;transform-origin:0 0;transform:scaleX(0.9606);">LotShape</div>
<svg class="a" style="left:2191px;top:46px" width="24" height="20" viewBox="0 0 24 20"><g fill="#8a98ab">
<path d="M5.6 1 C8.6 1 10.6 3.2 10.6 6.4 C10.6 11.4 7.4 16.2 2.2 19 L1.2 17.4 C4.2 15.4 5.9 13.4 6.3 11 C5.9 11.2 5.4 11.3 4.9 11.3 C2.1 11.3 0.4 9.1 0.4 6.3 C0.4 3.3 2.6 1 5.6 1 Z"/>
<path d="M17.8 1 C20.8 1 22.8 3.2 22.8 6.4 C22.8 11.4 19.6 16.2 14.4 19 L13.4 17.4 C16.4 15.4 18.1 13.4 18.5 11 C18.1 11.2 17.6 11.3 17.1 11.3 C14.3 11.3 12.6 9.1 12.6 6.3 C12.6 3.3 14.8 1 17.8 1 Z"/></g></svg>
<div class="t " style="left:2224.49px;top:42.00px;font-size:26.5px;color:#8a98ab;transform-origin:0 0;transform:scaleX(1.0453);">string</div>
<div class="a" style="left:2440px;top:6px;width:24px;height:24px;background:#dbdfe5"></div>
<svg class="a" style="left:2444px;top:12px" width="16" height="14" viewBox="0 0 16 14"><path d="M0.6 0.6 L14.2 0.6 L7.4 13.8 Z" fill="#fff"/></svg>
<div class="t " style="left:2488.99px;top:5.00px;font-size:27.4px;color:#4e6479;-webkit-text-stroke:0.18px currentColor;transform-origin:0 0;transform:scaleX(0.9832);">LandContour</div>
<svg class="a" style="left:2491px;top:46px" width="24" height="20" viewBox="0 0 24 20"><g fill="#8a98ab">
<path d="M5.6 1 C8.6 1 10.6 3.2 10.6 6.4 C10.6 11.4 7.4 16.2 2.2 19 L1.2 17.4 C4.2 15.4 5.9 13.4 6.3 11 C5.9 11.2 5.4 11.3 4.9 11.3 C2.1 11.3 0.4 9.1 0.4 6.3 C0.4 3.3 2.6 1 5.6 1 Z"/>
<path d="M17.8 1 C20.8 1 22.8 3.2 22.8 6.4 C22.8 11.4 19.6 16.2 14.4 19 L13.4 17.4 C16.4 15.4 18.1 13.4 18.5 11 C18.1 11.2 17.6 11.3 17.1 11.3 C14.3 11.3 12.6 9.1 12.6 6.3 C12.6 3.3 14.8 1 17.8 1 Z"/></g></svg>
<div class="t " style="left:2524.49px;top:42.00px;font-size:26.5px;color:#8a98ab;transform-origin:0 0;transform:scaleX(1.0453);">string</div>
<div class="a" style="left:2740px;top:6px;width:24px;height:24px;background:#dbdfe5"></div>
<svg class="a" style="left:2744px;top:12px" width="16" height="14" viewBox="0 0 16 14"><path d="M0.6 0.6 L14.2 0.6 L7.4 13.8 Z" fill="#fff"/></svg>
<div class="t " style="left:2789.28px;top:5.00px;font-size:27.4px;color:#4e6479;-webkit-text-stroke:0.18px currentColor;transform-origin:0 0;transform:scaleX(1.0345);">Utilities</div>
<svg class="a" style="left:2791px;top:46px" width="24" height="20" viewBox="0 0 24 20"><g fill="#8a98ab">
<path d="M5.6 1 C8.6 1 10.6 3.2 10.6 6.4 C10.6 11.4 7.4 16.2 2.2 19 L1.2 17.4 C4.2 15.4 5.9 13.4 6.3 11 C5.9 11.2 5.4 11.3 4.9 11.3 C2.1 11.3 0.4 9.1 0.4 6.3 C0.4 3.3 2.6 1 5.6 1 Z"/>
<path d="M17.8 1 C20.8 1 22.8 3.2 22.8 6.4 C22.8 11.4 19.6 16.2 14.4 19 L13.4 17.4 C16.4 15.4 18.1 13.4 18.5 11 C18.1 11.2 17.6 11.3 17.1 11.3 C14.3 11.3 12.6 9.1 12.6 6.3 C12.6 3.3 14.8 1 17.8 1 Z"/></g></svg>
<div class="t " style="left:2824.49px;top:42.00px;font-size:26.5px;color:#8a98ab;transform-origin:0 0;transform:scaleX(1.0453);">string</div>
<div class="m" style="left:32.8px;top:92.00px;font-size:24px;color:#4b6279;">1</div>
<div class="m" style="right:2524px;top:92.00px;font-size:24px;color:#000;">1</div>
<div class="m" style="right:2224px;top:92.00px;font-size:24px;color:#000;">60</div>
<div class="m" style="left:689.5px;top:92.00px;font-size:24px;color:#000;">RL</div>
<div class="m" style="left:989.5px;top:92.00px;font-size:24px;color:#000;">65</div>
<div class="m" style="right:1324px;top:92.00px;font-size:24px;color:#000;">8450</div>
<div class="m" style="left:1589.5px;top:92.00px;font-size:24px;color:#000;">Pave</div>
<div class="m" style="left:1889.5px;top:92.00px;font-size:24px;color:#000;">NA</div>
<div class="m" style="left:2189.5px;top:92.00px;font-size:24px;color:#000;">Reg</div>
<div class="m" style="left:2489.5px;top:92.00px;font-size:24px;color:#000;">Lvl</div>
<div class="m" style="left:2789.5px;top:92.00px;font-size:24px;color:#000;">AllPub</div>
<div class="m" style="left:32.8px;top:132.00px;font-size:24px;color:#4b6279;">2</div>
<div class="m" style="right:2524px;top:132.00px;font-size:24px;color:#000;">2</div>
<div class="m" style="right:2224px;top:132.00px;font-size:24px;color:#000;">20</div>
<div class="m" style="left:689.5px;top:132.00px;font-size:24px;color:#000;">RL</div>
<div class="m" style="left:989.5px;top:132.00px;font-size:24px;color:#000;">80</div>
<div class="m" style="right:1324px;top:132.00px;font-size:24px;color:#000;">9600</div>
<div class="m" style="left:1589.5px;top:132.00px;font-size:24px;color:#000;">Pave</div>
<div class="m" style="left:1889.5px;top:132.00px;font-size:24px;color:#000;">NA</div>
<div class="m" style="left:2189.5px;top:132.00px;font-size:24px;color:#000;">Reg</div>
<div class="m" style="left:2489.5px;top:132.00px;font-size:24px;color:#000;">Lvl</div>
<div class="m" style="left:2789.5px;top:132.00px;font-size:24px;color:#000;">AllPub</div>
<div class="m" style="left:32.8px;top:172.00px;font-size:24px;color:#4b6279;">3</div>
<div class="m" style="right:2524px;top:172.00px;font-size:24px;color:#000;">3</div>
<div class="m" style="right:2224px;top:172.00px;font-size:24px;color:#000;">60</div>
<div class="m" style="left:689.5px;top:172.00px;font-size:24px;color:#000;">RL</div>
<div class="m" style="left:989.5px;top:172.00px;font-size:24px;color:#000;">68</div>
<div class="m" style="right:1324px;top:172.00px;font-size:24px;color:#000;">11250</div>
<div class="m" style="left:1589.5px;top:172.00px;font-size:24px;color:#000;">Pave</div>
<div class="m" style="left:1889.5px;top:172.00px;font-size:24px;color:#000;">NA</div>
<div class="m" style="left:2189.5px;top:172.00px;font-size:24px;color:#000;">IR1</div>
<div class="m" style="left:2489.5px;top:172.00px;font-size:24px;color:#000;">Lvl</div>
<div class="m" style="left:2789.5px;top:172.00px;font-size:24px;color:#000;">AllPub</div>
<div class="m" style="left:32.8px;top:212.00px;font-size:24px;color:#4b6279;">4</div>
<div class="m" style="right:2524px;top:212.00px;font-size:24px;color:#000;">4</div>
<div class="m" style="right:2224px;top:212.00px;font-size:24px;color:#000;">70</div>
<div class="m" style="left:689.5px;top:212.00px;font-size:24px;color:#000;">RL</div>
<div class="m" style="left:989.5px;top:212.00px;font-size:24px;color:#000;">60</div>
<div class="m" style="right:1324px;top:212.00px;font-size:24px;color:#000;">9550</div>
<div class="m" style="left:1589.5px;top:212.00px;font-size:24px;color:#000;">Pave</div>
<div class="m" style="left:1889.5px;top:212.00px;font-size:24px;color:#000;">NA</div>
<div class="m" style="left:2189.5px;top:212.00px;font-size:24px;color:#000;">IR1</div>
<div class="m" style="left:2489.5px;top:212.00px;font-size:24px;color:#000;">Lvl</div>
<div class="m" style="left:2789.5px;top:212.00px;font-size:24px;color:#000;">AllPub</div>
<div class="m" style="left:32.8px;top:252.00px;font-size:24px;color:#4b6279;">5</div>
<div class="m" style="right:2524px;top:252.00px;font-size:24px;color:#000;">5</div>
<div class="m" style="right:2224px;top:252.00px;font-size:24px;color:#000;">60</div>
<div class="m" style="left:689.5px;top:252.00px;font-size:24px;color:#000;">RL</div>
<div class="m" style="left:989.5px;top:252.00px;font-size:24px;color:#000;">84</div>
<div class="m" style="right:1324px;top:252.00px;font-size:24px;color:#000;">14260</div>
<div class="m" style="left:1589.5px;top:252.00px;font-size:24px;color:#000;">Pave</div>
<div class="m" style="left:1889.5px;top:252.00px;font-size:24px;color:#000;">NA</div>
<div class="m" style="left:2189.5px;top:252.00px;font-size:24px;color:#000;">IR1</div>
<div class="m" style="left:2489.5px;top:252.00px;font-size:24px;color:#000;">Lvl</div>
<div class="m" style="left:2789.5px;top:252.00px;font-size:24px;color:#000;">AllPub</div>
<div class="m" style="left:32.8px;top:292.00px;font-size:24px;color:#4b6279;">6</div>
<div class="m" style="right:2524px;top:292.00px;font-size:24px;color:#000;">6</div>
<div class="m" style="right:2224px;top:292.00px;font-size:24px;color:#000;">50</div>
<div class="m" style="left:689.5px;top:292.00px;font-size:24px;color:#000;">RL</div>
<div class="m" style="left:989.5px;top:292.00px;font-size:24px;color:#000;">85</div>
<div class="m" style="right:1324px;top:292.00px;font-size:24px;color:#000;">14115</div>
<div class="m" style="left:1589.5px;top:292.00px;font-size:24px;color:#000;">Pave</div>
<div class="m" style="left:1889.5px;top:292.00px;font-size:24px;color:#000;">NA</div>
<div class="m" style="left:2189.5px;top:292.00px;font-size:24px;color:#000;">IR1</div>
<div class="m" style="left:2489.5px;top:292.00px;font-size:24px;color:#000;">Lvl</div>
<div class="m" style="left:2789.5px;top:292.00px;font-size:24px;color:#000;">AllPub</div>
<div class="m" style="left:32.8px;top:332.00px;font-size:24px;color:#4b6279;">7</div>
<div class="m" style="right:2524px;top:332.00px;font-size:24px;color:#000;">7</div>
<div class="m" style="right:2224px;top:332.00px;font-size:24px;color:#000;">20</div>
<div class="m" style="left:689.5px;top:332.00px;font-size:24px;color:#000;">RL</div>
<div class="m" style="left:989.5px;top:332.00px;font-size:24px;color:#000;">75</div>
<div class="m" style="right:1324px;top:332.00px;font-size:24px;color:#000;">10084</div>
<div class="m" style="left:1589.5px;top:332.00px;font-size:24px;color:#000;">Pave</div>
<div class="m" style="left:1889.5px;top:332.00px;font-size:24px;color:#000;">NA</div>
<div class="m" style="left:2189.5px;top:332.00px;font-size:24px;color:#000;">Reg</div>
<div class="m" style="left:2489.5px;top:332.00px;font-size:24px;color:#000;">Lvl</div>
<div class="m" style="left:2789.5px;top:332.00px;font-size:24px;color:#000;">AllPub</div>
<div class="m" style="left:32.8px;top:372.00px;font-size:24px;color:#4b6279;">8</div>
<div class="m" style="right:2524px;top:372.00px;font-size:24px;color:#000;">8</div>
<div class="m" style="right:2224px;top:372.00px;font-size:24px;color:#000;">60</div>
<div class="m" style="left:689.5px;top:372.00px;font-size:24px;color:#000;">RL</div>
<div class="m" style="left:989.5px;top:372.00px;font-size:24px;color:#000;">NA</div>
<div class="m" style="right:1324px;top:372.00px;font-size:24px;color:#000;">10382</div>
<div class="m" style="left:1589.5px;top:372.00px;font-size:24px;color:#000;">Pave</div>
<div class="m" style="left:1889.5px;top:372.00px;font-size:24px;color:#000;">NA</div>
<div class="m" style="left:2189.5px;top:372.00px;font-size:24px;color:#000;">IR1</div>
<div class="m" style="left:2489.5px;top:372.00px;font-size:24px;color:#000;">Lvl</div>
<div class="m" style="left:2789.5px;top:372.00px;font-size:24px;color:#000;">AllPub</div>
<div class="m" style="left:32.8px;top:412.00px;font-size:24px;color:#4b6279;">9</div>
<div class="m" style="right:2524px;top:412.00px;font-size:24px;color:#000;">9</div>
<div class="m" style="right:2224px;top:412.00px;font-size:24px;color:#000;">50</div>
<div class="m" style="left:689.5px;top:412.00px;font-size:24px;color:#000;">RM</div>
<div class="m" style="left:989.5px;top:412.00px;font-size:24px;color:#000;">51</div>
<div class="m" style="right:1324px;top:412.00px;font-size:24px;color:#000;">6120</div>
<div class="m" style="left:1589.5px;top:412.00px;font-size:24px;color:#000;">Pave</div>
<div class="m" style="left:1889.5px;top:412.00px;font-size:24px;color:#000;">NA</div>
<div class="m" style="left:2189.5px;top:412.00px;font-size:24px;color:#000;">Reg</div>
<div class="m" style="left:2489.5px;top:412.00px;font-size:24px;color:#000;">Lvl</div>
<div class="m" style="left:2789.5px;top:412.00px;font-size:24px;color:#000;">AllPub</div>
<div class="m" style="left:25.6px;top:452.00px;font-size:24px;color:#4b6279;">10</div>
<div class="m" style="right:2524px;top:452.00px;font-size:24px;color:#000;">10</div>
<div class="m" style="right:2224px;top:452.00px;font-size:24px;color:#000;">190</div>
<div class="m" style="left:689.5px;top:452.00px;font-size:24px;color:#000;">RL</div>
<div class="m" style="left:989.5px;top:452.00px;font-size:24px;color:#000;">50</div>
<div class="m" style="right:1324px;top:452.00px;font-size:24px;color:#000;">7420</div>
<div class="m" style="left:1589.5px;top:452.00px;font-size:24px;color:#000;">Pave</div>
<div class="m" style="left:1889.5px;top:452.00px;font-size:24px;color:#000;">NA</div>
<div class="m" style="left:2189.5px;top:452.00px;font-size:24px;color:#000;">Reg</div>
<div class="m" style="left:2489.5px;top:452.00px;font-size:24px;color:#000;">Lvl</div>
<div class="m" style="left:2789.5px;top:452.00px;font-size:24px;color:#000;">AllPub</div>
<div class="m" style="left:25.6px;top:492.00px;font-size:24px;color:#4b6279;">11</div>
<div class="m" style="right:2524px;top:492.00px;font-size:24px;color:#000;">11</div>
<div class="m" style="right:2224px;top:492.00px;font-size:24px;color:#000;">20</div>
<div class="m" style="left:689.5px;top:492.00px;font-size:24px;color:#000;">RL</div>
<div class="m" style="left:989.5px;top:492.00px;font-size:24px;color:#000;">70</div>
<div class="m" style="right:1324px;top:492.00px;font-size:24px;color:#000;">11200</div>
<div class="m" style="left:1589.5px;top:492.00px;font-size:24px;color:#000;">Pave</div>
<div class="m" style="left:1889.5px;top:492.00px;font-size:24px;color:#000;">NA</div>
<div class="m" style="left:2189.5px;top:492.00px;font-size:24px;color:#000;">Reg</div>
<div class="m" style="left:2489.5px;top:492.00px;font-size:24px;color:#000;">Lvl</div>
<div class="m" style="left:2789.5px;top:492.00px;font-size:24px;color:#000;">AllPub</div>
<div class="m" style="left:25.6px;top:533.00px;font-size:24px;color:#4b6279;">12</div>
<div class="m" style="right:2524px;top:533.00px;font-size:24px;color:#000;">12</div>
<div class="m" style="right:2224px;top:533.00px;font-size:24px;color:#000;">60</div>
<div class="m" style="left:689.5px;top:533.00px;font-size:24px;color:#000;">RL</div>
<div class="m" style="left:989.5px;top:533.00px;font-size:24px;color:#000;">85</div>
<div class="m" style="right:1324px;top:533.00px;font-size:24px;color:#000;">11924</div>
<div class="m" style="left:1589.5px;top:533.00px;font-size:24px;color:#000;">Pave</div>
<div class="m" style="left:1889.5px;top:533.00px;font-size:24px;color:#000;">NA</div>
<div class="m" style="left:2189.5px;top:533.00px;font-size:24px;color:#000;">IR1</div>
<div class="m" style="left:2489.5px;top:533.00px;font-size:24px;color:#000;">Lvl</div>
<div class="m" style="left:2789.5px;top:533.00px;font-size:24px;color:#000;">AllPub</div>
</div>
<div class="a" style="left:2894px;top:1082px;width:22px;height:534px;background:#fafafa;border-left:2px solid #e8e8e8"></div>
<div class="a" style="left:2902px;top:1082px;width:16px;height:24px;background:#c1c1c1;border-radius:8px"></div>
<div class="a" style="left:0;top:1616px;width:2916px;height:22px;background:#fafafa;border-top:2px solid #e8e8e8"></div>
<div class="a" style="left:6px;top:1624px;width:332px;height:16px;background:#c1c1c1;border-radius:8px"></div>
<div class="a" style="left:2590px;top:1526px;width:284px;height:70px;background:#fff;border-radius:5px;box-shadow:0 0 0 1px rgba(17,20,24,.08),0 4px 8px rgba(17,20,24,.18),0 16px 40px rgba(17,20,24,.22)"></div>
<div class="t " style="left:2615.01px;top:1549.00px;font-size:26.5px;color:#215db0;transform-origin:0 0;transform:scaleX(1.0012);">Calculate row count</div>
</div>
</body></html>
